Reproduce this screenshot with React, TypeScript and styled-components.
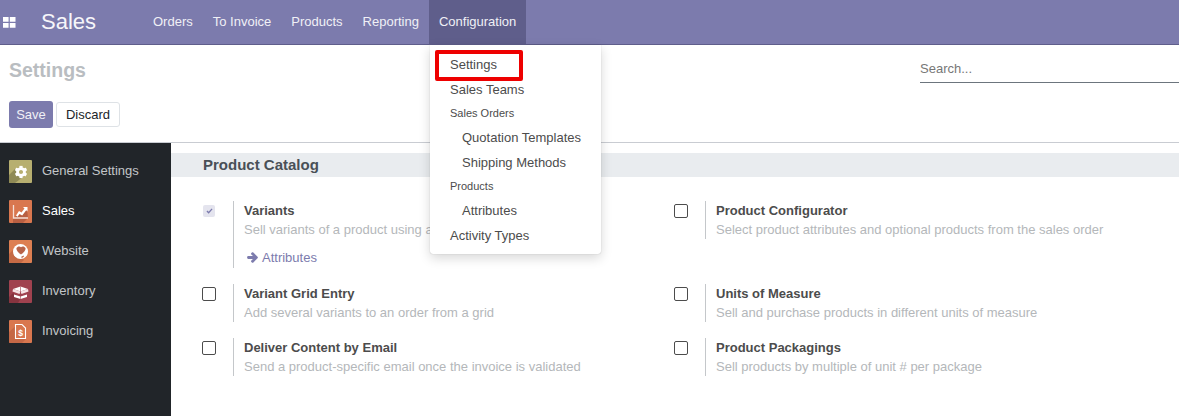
import styled, {createGlobalStyle} from 'styled-components'
import {FaArrowRight, FaCog} from 'react-icons/fa'

const GlobalStyle = createGlobalStyle`
  html, body {
    margin: 0;
    height: 100%;
    background: #fff;
    font-family: "Liberation Sans", Arial, sans-serif;
    font-size: 13px;
    color: #4c4c4c;
  }
  #root {
    height: 100%;
  }
`

const Page = styled.div`
  position: relative;
  width: 1179px;
  height: 416px;
  overflow: hidden;
  display: flex;
  flex-direction: column;
`

const Navbar = styled.header`
  height: 45px;
  box-sizing: border-box;
  flex: none;
  display: flex;
  align-items: stretch;
  background: #7c7bad;
  border-bottom: 1px solid #5f5e8b;
  color: #fff;
`

const AppsButton = styled.div`
  width: 41px;
  padding-left: 3px;
  box-sizing: border-box;
  display: flex;
  align-items: center;
`

const Brand = styled.div`
  font-size: 22px;
  line-height: 44px;
  width: 102px;
  color: #f6f6fa;
`

const NavItem = styled.div<{$open?: boolean}>`
  padding: 0 10px;
  line-height: 44px;
  color: #f0f0f6;
  background: ${p => (p.$open ? '#5f5e8b' : 'transparent')};
`

const ControlPanel = styled.div`
  height: 98px;
  flex: none;
  box-sizing: border-box;
  padding: 13px 0 0 9px;
  border-bottom: 1px solid #c9ccd2;
  display: flex;
  justify-content: space-between;
`

const PanelLeft = styled.div`
  display: flex;
  flex-direction: column;
  gap: 19px;
`

const PageTitle = styled.div`
  font-size: 19.5px;
  line-height: 24px;
  font-weight: bold;
  color: #b9bdc1;
`

const Buttons = styled.div`
  display: flex;
  align-items: center;
  gap: 3px;
`

const SaveButton = styled.div`
  height: 27px;
  width: 44px;
  box-sizing: border-box;
  border-radius: 3px;
  background: #7c7bad;
  color: #f0f0f6;
  text-align: center;
  line-height: 27px;
`

const DiscardButton = styled.div`
  height: 25px;
  width: 64px;
  box-sizing: border-box;
  border: 1px solid #dee2e6;
  border-radius: 3px;
  background: #fff;
  color: #212529;
  text-align: center;
  line-height: 23px;
`

const SearchBox = styled.div`
  width: 259px;
  height: 25px;
  box-sizing: border-box;
  border-bottom: 1px solid #6c757d;
  padding: 2px 0 0 0;
  font-size: 13px;
  line-height: 18px;
  color: #777;
`

const Body = styled.div`
  flex: 1;
  display: flex;
  min-height: 0;
`

const Sidebar = styled.nav`
  width: 171px;
  flex: none;
  background: #212529;
  padding-top: 8px;
  box-sizing: border-box;
`

const SideItem = styled.div<{$active?: boolean}>`
  height: 40px;
  padding-left: 9px;
  display: flex;
  align-items: center;
  gap: 10px;
  color: ${p => (p.$active ? '#fff' : '#c2c5c8')};
`

const SideLabel = styled.span`
  padding-bottom: 2px;
`

const AppIcon = styled.svg`
  width: 23px;
  height: 23px;
  flex: none;
  display: block;
`

const Content = styled.main`
  flex: 1;
  min-width: 0;
  padding-top: 10px;
`

const SectionHead = styled.h2`
  margin: 0;
  height: 24px;
  padding-left: 32px;
  background: #e9ecef;
  font-size: 15px;
  line-height: 24px;
  font-weight: bold;
  color: #495057;
`

const SettingsGrid = styled.div`
  display: grid;
  grid-template-columns: 472px 472px;
  align-items: start;
  padding: 24px 0 0 31px;
  row-gap: 16px;
`

const Setting = styled.div`
  display: flex;
`

const CheckCell = styled.div`
  width: 31px;
  flex: none;
  padding-top: 3px;
`

const CheckBox = styled.div<{$checked?: boolean}>`
  box-sizing: border-box;
  width: ${p => (p.$checked ? '12px' : '14px')};
  height: ${p => (p.$checked ? '12px' : '14px')};
  margin: ${p => (p.$checked ? '1px 0 0 1px' : '0')};
  border: ${p => (p.$checked ? 'none' : '1.5px solid #4c4c4c')};
  border-radius: 2px;
  background: ${p => (p.$checked ? '#e4e4ee' : '#fff')};
  display: flex;
  align-items: center;
  justify-content: center;
`

const SettingText = styled.div<{$tall?: boolean}>`
  border-left: 1px solid #c4c7ca;
  padding-left: 10px;
  min-height: ${p => (p.$tall ? '67px' : '38px')};
  box-sizing: border-box;
`

const SettingName = styled.div`
  font-weight: bold;
  line-height: 19px;
  color: #4c4c4c;
`

const SettingHelp = styled.div`
  line-height: 19px;
  color: #b4b7ba;
  white-space: nowrap;
`

const SettingLink = styled.div`
  margin: 9px 0 0 3px;
  line-height: 19px;
  color: #7c7bad;
  display: flex;
  align-items: center;
  gap: 4px;
`

const Dropdown = styled.div`
  position: absolute;
  left: 430px;
  top: 45px;
  width: 171px;
  height: 209px;
  box-sizing: border-box;
  background: #fff;
  border-radius: 0 0 3px 3px;
  box-shadow: 0 0 1px rgba(0, 0, 0, 0.3), 0 4px 12px rgba(0, 0, 0, 0.16);
  padding-top: 7px;
`

const MenuItem = styled.div<{$indent?: boolean}>`
  height: 25px;
  line-height: 25px;
  padding-left: ${p => (p.$indent ? '32px' : '20px')};
  color: #4c4c4c;
  white-space: nowrap;
`

const MenuHeader = styled.div`
  height: 23px;
  line-height: 23px;
  padding-left: 20px;
  font-size: 11px;
  color: #4c4c4c;
`

const Highlight = styled.div`
  position: absolute;
  left: 435px;
  top: 50px;
  width: 88px;
  height: 31px;
  box-sizing: border-box;
  border: 4px solid #ee0000;
  border-radius: 2px;
`

const settings = [
  {name: 'Variants', help: 'Sell variants of a product using attributes (size, color, etc.)', checked: true, link: 'Attributes'},
  {name: 'Product Configurator', help: 'Select product attributes and optional products from the sales order'},
  {name: 'Variant Grid Entry', help: 'Add several variants to an order from a grid'},
  {name: 'Units of Measure', help: 'Sell and purchase products in different units of measure'},
  {name: 'Deliver Content by Email', help: 'Send a product-specific email once the invoice is validated'},
  {name: 'Product Packagings', help: 'Sell products by multiple of unit # per package'},
]

const GearIcon = () => (
  <AppIcon viewBox="0 0 23 23">
    <rect width="23" height="23" rx="1" fill="#b7af70" />
    <path d="M6 9L14 17 6 23H0V15Z" fill="#8f8a56" />
    <FaCog x="5.500" y="5.500" width="12" height="12" color="#fff" />
  </AppIcon>
)

const ChartIcon = () => (
  <AppIcon viewBox="0 0 23 23">
    <rect width="23" height="23" rx="1" fill="#d9774f" />
    <path d="M4 18L18 9 19 18 14 23H4Z" fill="#b85f42" />
    <path d="M4.500 5v13h14.500" stroke="#f6dfd5" strokeWidth="1.300" fill="none" />
    <path d="M7 15.500l3-4.500 2.500 1.500 3-4-1.500-1.500h4.500v4.500l-1.300-1.300-4 5.300-2.700-1.600-2 2.800z" fill="#fff" />
  </AppIcon>
)

const GlobeIcon = () => (
  <AppIcon viewBox="0 0 23 23">
    <rect width="23" height="23" rx="1" fill="#dd7f52" />
    <path d="M6 8L15 20 12 23H0V14Z" fill="#c56a45" />
    <circle cx="11.500" cy="11.500" r="7.500" fill="#fff" />
    <path d="M7.500 8c1-2 3.500-2 4.500-.8 1-1.200 3.500-1.200 4.500.8.500 2-2 5-4.500 6.500-2.500-1.500-5-4.500-4.500-6.500z" fill="#b8644a" />
    <path d="M12 17l2.500-1.500.5 1-2 1.500z" fill="#b8644a" />
  </AppIcon>
)

const BoxIcon = () => (
  <AppIcon viewBox="0 0 23 23">
    <rect width="23" height="23" rx="1" fill="#a0424f" />
    <path d="M4 13L12 18 9 23H0V17Z" fill="#86343f" />
    <path d="M4 9l7.500-2.500L19 9l-7.500 2.500z" fill="#fff" />
    <path d="M4 9l-0.500 2.500 7 2.500 1-2.500zM19 9l.5 2.500-7 2.500-1-2.500z" fill="#f5e3e5" />
    <path d="M5 14.500l6.500 2 6.500-2v2.500l-6.500 2-6.500-2z" fill="#fff" />
    <path d="M11.200 6.500h.6v12.500h-.6z" fill="#a0424f" />
  </AppIcon>
)

const InvoiceIcon = () => (
  <AppIcon viewBox="0 0 23 23">
    <rect width="23" height="23" rx="1" fill="#d9774f" />
    <path d="M6.500 6L17 19 13 23H0V12Z" fill="#bc6343" opacity="0.7" />
    <path d="M6.500 4.500h6.500l3.500 3.500v10.500h-10z" fill="#d9774f" stroke="#fff" strokeWidth="1.100" />
    <text x="11.500" y="16" fontSize="8.500" fontWeight="bold" fill="#fff" textAnchor="middle">$</text>
  </AppIcon>
)

const AppsGlyph = () => (
  <svg width="13" height="11" viewBox="0 0 13 11">
    <path d="M0 0h5.600v4.800H0zM6.800 0H12.500v4.800H6.800zM0 6h5.600v4.800H0zM6.800 6H12.500v4.800H6.800z" fill="#fff" />
  </svg>
)

export default function App(): JSX.Element {
  return (
    <Page>
      <GlobalStyle />
      <Navbar>
        <AppsButton>
          <AppsGlyph />
        </AppsButton>
        <Brand>Sales</Brand>
        <NavItem>Orders</NavItem>
        <NavItem>To Invoice</NavItem>
        <NavItem>Products</NavItem>
        <NavItem>Reporting</NavItem>
        <NavItem $open>Configuration</NavItem>
      </Navbar>
      <ControlPanel>
        <PanelLeft>
          <PageTitle>Settings</PageTitle>
          <Buttons>
            <SaveButton>Save</SaveButton>
            <DiscardButton>Discard</DiscardButton>
          </Buttons>
        </PanelLeft>
        <SearchBox>Search...</SearchBox>
      </ControlPanel>
      <Body>
        <Sidebar>
          <SideItem><GearIcon /><SideLabel>General Settings</SideLabel></SideItem>
          <SideItem $active><ChartIcon /><SideLabel>Sales</SideLabel></SideItem>
          <SideItem><GlobeIcon /><SideLabel>Website</SideLabel></SideItem>
          <SideItem><BoxIcon /><SideLabel>Inventory</SideLabel></SideItem>
          <SideItem><InvoiceIcon /><SideLabel>Invoicing</SideLabel></SideItem>
        </Sidebar>
        <Content>
          <SectionHead>Product Catalog</SectionHead>
          <SettingsGrid>
            {settings.map(s => (
              <Setting key={s.name}>
                <CheckCell>
                  <CheckBox $checked={s.checked}>
                    {s.checked && (
                      <svg width="7" height="6" viewBox="0 0 8 7">
                        <path d="M1 3.500l2 2 4-4.500" stroke="#7c7bad" strokeWidth="1.500" fill="none" />
                      </svg>
                    )}
                  </CheckBox>
                </CheckCell>
                <SettingText $tall={!!s.link}>
                  <SettingName>{s.name}</SettingName>
                  <SettingHelp>{s.help}</SettingHelp>
                  {s.link && (
                    <SettingLink>
                      <FaArrowRight size={11} stroke="currentColor" strokeWidth={50} />
                      {s.link}
                    </SettingLink>
                  )}
                </SettingText>
              </Setting>
            ))}
          </SettingsGrid>
        </Content>
      </Body>
      <Dropdown>
        <MenuItem>Settings</MenuItem>
        <MenuItem>Sales Teams</MenuItem>
        <MenuHeader>Sales Orders</MenuHeader>
        <MenuItem $indent>Quotation Templates</MenuItem>
        <MenuItem $indent>Shipping Methods</MenuItem>
        <MenuHeader>Products</MenuHeader>
        <MenuItem $indent>Attributes</MenuItem>
        <MenuItem>Activity Types</MenuItem>
      </Dropdown>
      <Highlight />
    </Page>
  )
}
